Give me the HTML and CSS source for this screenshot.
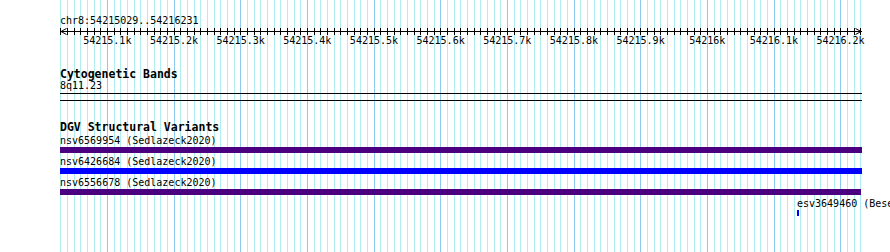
FILE: index.html
```html
<!DOCTYPE html>
<html lang="en">
<head>
  <meta charset="UTF-8">
  <title>chr8:54215029..54216231</title>
  <link rel="stylesheet" href="styles.css">
</head>
<body>
<div class="browser">
  <!-- grid lines, filled by script.js -->
  <svg class="grid" id="grid" width="802" height="252"></svg>

  <div class="location">chr8:54215029..54216231</div>

  <svg class="ruler" id="ruler" width="802" height="8">
    <rect x="0" y="4" width="802" height="1" fill="#000"/>
    <path d="M6.5 1.5 L1 4.5 L6.5 7.5" fill="none" stroke="#000" stroke-width="1"/>
    <path d="M795.5 1.5 L801 4.5 L795.5 7.5" fill="none" stroke="#000" stroke-width="1"/>
  </svg>
  <div class="ruler-labels">
    <span>54215.1k</span>
    <span>54215.2k</span>
    <span>54215.3k</span>
    <span>54215.4k</span>
    <span>54215.5k</span>
    <span>54215.6k</span>
    <span>54215.7k</span>
    <span>54215.8k</span>
    <span>54215.9k</span>
    <span>54216k</span>
    <span>54216.1k</span>
    <span>54216.2k</span>
  </div>

  <!-- cytogenetic bands -->
  <div class="track cyto">
    <h2>Cytogenetic Bands</h2>
    <div class="label">8q11.23</div>
  </div>
  <div class="rule"></div>
  <div class="rule second"></div>

  <!-- DGV -->
  <div class="track dgv">
    <h2>DGV Structural Variants</h2>
    <div class="feature">
      <div class="label">nsv6569954 (Sedlazeck2020)</div>
      <div class="bar purple" style="width: 802px"></div>
    </div>
    <div class="feature">
      <div class="label">nsv6426684 (Sedlazeck2020)</div>
      <div class="bar blue" style="width: 802px"></div>
    </div>
    <div class="feature">
      <div class="label">nsv6556678 (Sedlazeck2020)</div>
      <div class="bar purple" style="width: 801px"></div>
    </div>
    <div class="feature" style="margin-left: 737px">
      <div class="label">esv3649460 (Besenbacher2016)</div>
      <div class="bar blue" style="width: 2px"></div>
    </div>
  </div>
</div>
<script src="script.js"></script>
</body>
</html>
```

FILE: styles.css
```css
* {
  margin: 0;
  padding: 0;
  box-sizing: border-box;
}

body {
  font-family: 'DejaVu Sans Mono', 'Liberation Mono', monospace;
  font-size: 10px;
  color: #000;
  background-color: #fff;
  overflow: hidden;
}

.browser {
  position: relative;
  z-index: 0;
  margin-left: 60px;
  width: 802px;
  height: 252px;
  padding-top: 15px;
}

/* 그리드 */
.grid {
  position: absolute;
  top: 0;
  left: 0;
  z-index: -1;
}

.location {
  line-height: 12px;
  white-space: nowrap;
}

.ruler {
  display: block;
}

.ruler-labels {
  display: flex;
  margin-left: 14px;
  line-height: 11px;
}

.ruler-labels span {
  flex: 0 0 66.667px;
  text-align: center;
  white-space: nowrap;
}

.track h2 {
  font-size: 11.5px;
  font-weight: bold;
  line-height: 12px;
  white-space: nowrap;
}

.cyto {
  margin-top: 22px;
}

.label {
  line-height: 12px;
  white-space: nowrap;
}

.rule {
  margin-top: 1px;
  height: 1px;
  background-color: #000;
}

.rule.second {
  margin-top: 6px;
}

.dgv {
  margin-top: 20px;
}

.dgv h2 {
  margin-bottom: 2px;
}

.feature {
  margin-bottom: 3px;
}

.bar {
  height: 6px;
}

.bar.purple {
  background-color: #4b0082;
}

.bar.blue {
  background-color: #0000ff;
}
```

FILE: script.js
```js
// 10bp 마다 그리드 + 눈금
const grid = document.getElementById('grid');
const ruler = document.getElementById('ruler');
const start = 54215029;
const bpPerPx = 1.5;
const ns = 'http://www.w3.org/2000/svg';

for (let bp = 54215030; bp <= 54216230; bp += 10) {
  const x = Math.floor((bp - start) / bpPerPx);
  const major = bp % 100 === 0;

  const line = document.createElementNS(ns, 'rect');
  line.setAttribute('x', x);
  line.setAttribute('y', 0);
  line.setAttribute('width', 1);
  line.setAttribute('height', 252);
  line.setAttribute('fill', major ? '#8ccbf0' : '#aeeeee');
  grid.appendChild(line);

  const tick = document.createElementNS(ns, 'rect');
  tick.setAttribute('x', x);
  tick.setAttribute('y', 1);
  tick.setAttribute('width', 1);
  tick.setAttribute('height', 7);
  tick.setAttribute('fill', '#000');
  ruler.appendChild(tick);
}
```
